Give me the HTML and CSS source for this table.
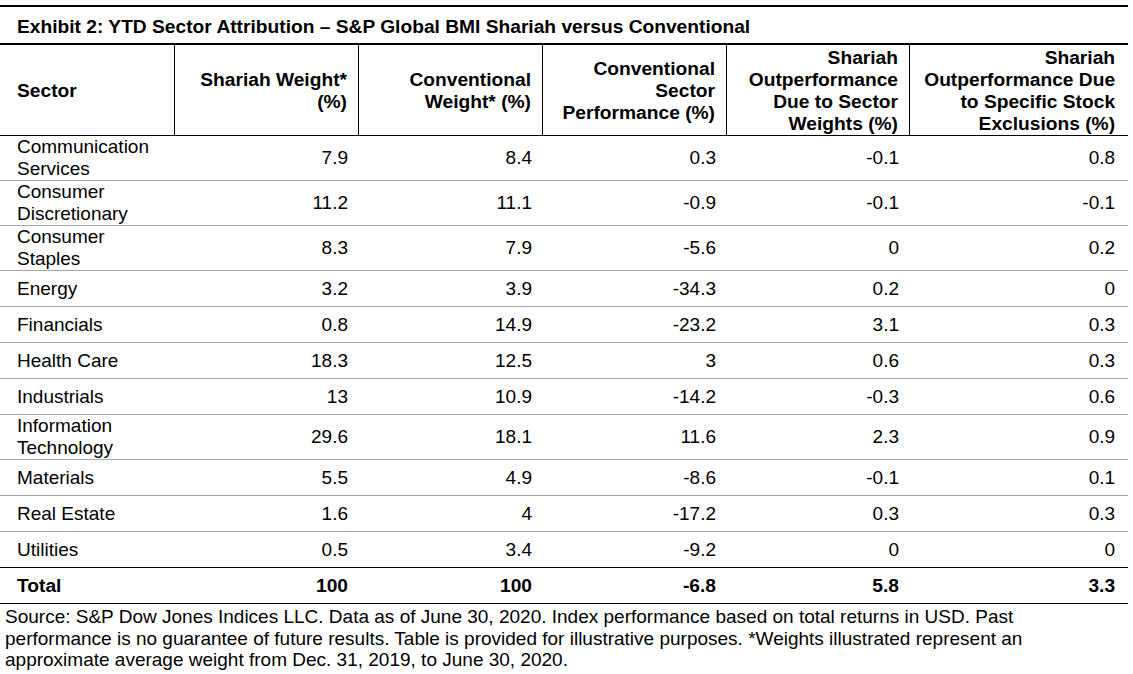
FILE: index.html
```html
<!DOCTYPE html>
<html lang="en">
<head>
<meta charset="utf-8">
<title>Exhibit 2: YTD Sector Attribution</title>
<link rel="stylesheet" href="styles.css">
</head>
<body>
<div class="exhibit">
<table class="grid">
<colgroup>
<col class="c1"><col class="c2"><col class="c3"><col class="c4"><col class="c5"><col class="c6">
</colgroup>
<thead>
<tr><th class="title" colspan="6">Exhibit 2: YTD Sector Attribution – S&amp;P Global BMI Shariah versus Conventional</th></tr>
<tr class="head">
<th class="lft">Sector</th>
<th>Shariah Weight*<br>(%)</th>
<th>Conventional<br>Weight* (%)</th>
<th>Conventional<br>Sector<br>Performance (%)</th>
<th>Shariah<br>Outperformance<br>Due to Sector<br>Weights (%)</th>
<th class="last">Shariah<br>Outperformance Due<br>to Specific Stock<br>Exclusions (%)</th>
</tr>
</thead>
<tbody>
<tr class="two"><td class="lft">Communication<br>Services</td><td>7.9</td><td>8.4</td><td>0.3</td><td>-0.1</td><td class="last">0.8</td></tr>
<tr class="two"><td class="lft">Consumer<br>Discretionary</td><td>11.2</td><td>11.1</td><td>-0.9</td><td>-0.1</td><td class="last">-0.1</td></tr>
<tr class="two"><td class="lft">Consumer<br>Staples</td><td>8.3</td><td>7.9</td><td>-5.6</td><td>0</td><td class="last">0.2</td></tr>
<tr class="one"><td class="lft">Energy</td><td>3.2</td><td>3.9</td><td>-34.3</td><td>0.2</td><td class="last">0</td></tr>
<tr class="one"><td class="lft">Financials</td><td>0.8</td><td>14.9</td><td>-23.2</td><td>3.1</td><td class="last">0.3</td></tr>
<tr class="one"><td class="lft">Health Care</td><td>18.3</td><td>12.5</td><td>3</td><td>0.6</td><td class="last">0.3</td></tr>
<tr class="one"><td class="lft">Industrials</td><td>13</td><td>10.9</td><td>-14.2</td><td>-0.3</td><td class="last">0.6</td></tr>
<tr class="two"><td class="lft">Information<br>Technology</td><td>29.6</td><td>18.1</td><td>11.6</td><td>2.3</td><td class="last">0.9</td></tr>
<tr class="one"><td class="lft">Materials</td><td>5.5</td><td>4.9</td><td>-8.6</td><td>-0.1</td><td class="last">0.1</td></tr>
<tr class="one"><td class="lft">Real Estate</td><td>1.6</td><td>4</td><td>-17.2</td><td>0.3</td><td class="last">0.3</td></tr>
<tr class="one end"><td class="lft">Utilities</td><td>0.5</td><td>3.4</td><td>-9.2</td><td>0</td><td class="last">0</td></tr>
<tr class="one total"><td class="lft">Total</td><td>100</td><td>100</td><td>-6.8</td><td>5.8</td><td class="last">3.3</td></tr>
</tbody>
</table>
<p class="note">Source: S&amp;P Dow Jones Indices LLC. Data as of June 30, 2020. Index performance based on total returns in USD. Past<br>performance is no guarantee of future results. Table is provided for illustrative purposes. *Weights illustrated represent an<br>approximate average weight from Dec. 31, 2019, to June 30, 2020.</p>
</div>
</body>
</html>
```
FILE: styles.css
```css
html, body {
  margin: 0;
  padding: 0;
  background: #ffffff;
}
body {
  font-family: "Liberation Sans", Arial, sans-serif;
  font-size: 19px;
  color: #000000;
}
.exhibit {
  width: 1128px;
  padding-top: 5px;
}
.grid {
  width: 1128px;
  table-layout: fixed;
  border-collapse: separate;
  border-spacing: 0;
}
.c1 { width: 175px; }
.c2 { width: 184px; }
.c3 { width: 184px; }
.c4 { width: 184px; }
.c5 { width: 183px; }
.c6 { width: 218px; }

.grid th, .grid td {
  padding: 0 11px 0 0;
  line-height: 22px;
  text-align: right;
  vertical-align: middle;
  white-space: nowrap;
}
.grid .lft {
  text-align: left;
  padding-left: 17px;
  padding-right: 0;
}
.grid .last {
  padding-right: 13px;
}
.grid th.title {
  text-align: left;
  padding: 9px 0 5px 17px;
  border-top: 2px solid #000;
  border-bottom: 2px solid #000;
  font-size: 19.2px;
  font-weight: bold;
}
.head th {
  height: 88px;
  padding-top: 2px;
  padding-bottom: 0;
  border-bottom: 1px solid #000;
  border-right: 1px solid #000;
  font-size: 19.2px;
  font-weight: bold;
}
.head th.last {
  border-right: none;
}
.two td {
  padding-top: 0;
  padding-bottom: 0;
  height: 44px;
  border-bottom: 1px solid #a6a6a6;
}
.one td {
  height: 22px;
  padding-top: 6.5px;
  padding-bottom: 6.5px;
  border-bottom: 1px solid #a6a6a6;
}
.end td {
  border-bottom: 1px solid #000;
}
.total td {
  font-size: 19.2px;
  font-weight: bold;
  border-bottom: 1px solid #000;
}
.note {
  margin: 0;
  padding: 2px 0 0 5px;
  line-height: 21.7px;
  white-space: nowrap;
}
```
